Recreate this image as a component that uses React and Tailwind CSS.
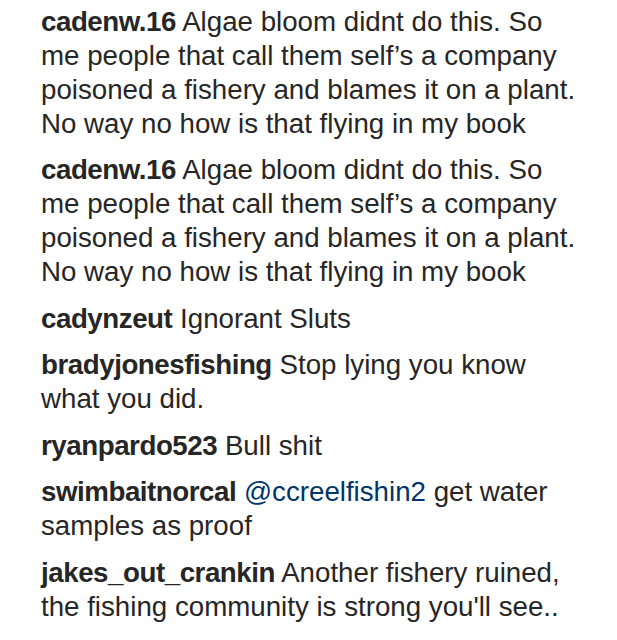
export default function App() {
  const comments = [
    { u: "cadenw.16", lines: ["Algae bloom didnt do this. So", "me people that call them self’s a company", "poisoned a fishery and blames it on a plant.", "No way no how is that flying in my book"] },
    { u: "cadenw.16", lines: ["Algae bloom didnt do this. So", "me people that call them self’s a company", "poisoned a fishery and blames it on a plant.", "No way no how is that flying in my book"] },
    { u: "cadynzeut", lines: ["Ignorant Sluts"] },
    { u: "bradyjonesfishing", lines: ["Stop lying you know", "what you did."] },
    { u: "ryanpardo523", lines: ["Bull shit"] },
    { u: "swimbaitnorcal", mention: "@ccreelfishin2", lines: ["get water", "samples as proof"] },
    { u: "jakes_out_crankin", lines: ["Another fishery ruined,", "the fishing community is strong you'll see.."] },
  ];
  return (
    <div className="w-[617px] h-[640px] bg-white overflow-hidden pt-[4.5px] pl-[41px] text-[#262626] text-[27.7px] leading-[34px]" style={{ fontFamily: '"Liberation Sans", Arial, sans-serif' }}>
      <div className="flex flex-col gap-[12.6px]">
        {comments.map((c, i) => (
          <div key={i}>
            {c.lines.map((l, j) => (
              <div key={j} className="whitespace-nowrap">
                {j === 0 && <span className="font-bold tracking-[-0.45px]">{c.u}</span>}
                {j === 0 && " "}
                {j === 0 && c.mention && <span className="text-[#003569]">{c.mention} </span>}
                {l}
              </div>
            ))}
          </div>
        ))}
      </div>
    </div>
  );
}
